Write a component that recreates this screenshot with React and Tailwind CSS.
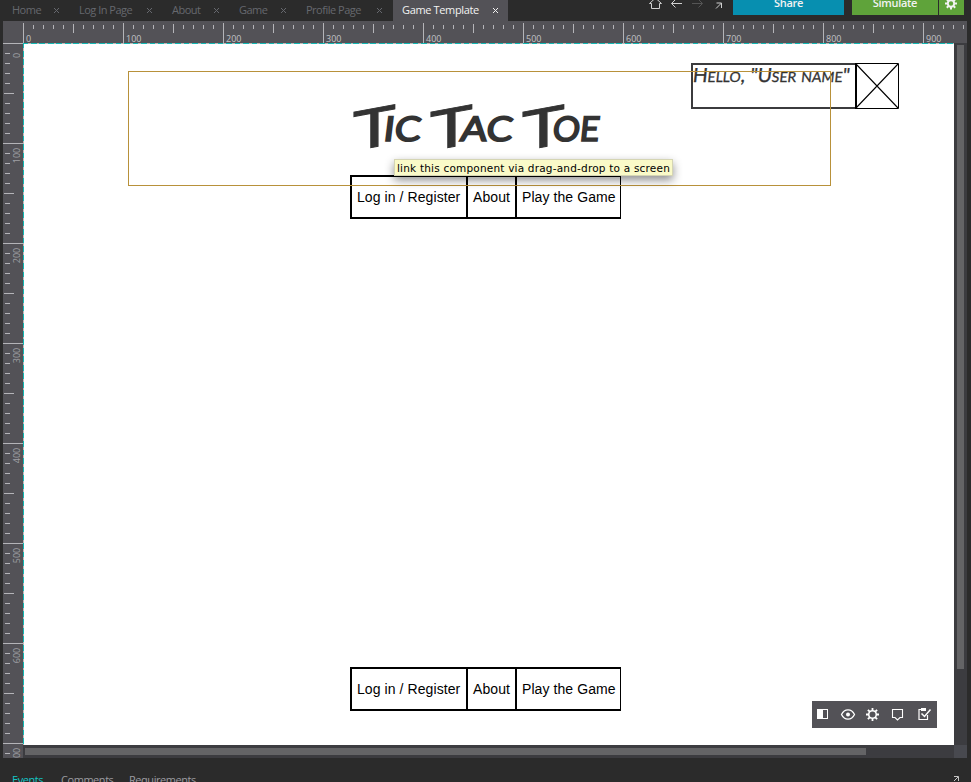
import React from "react";

const tabs = [
  { label: "Home", width: 67 },
  { label: "Log In Page", width: 93 },
  { label: "About", width: 67 },
  { label: "Game", width: 67 },
  { label: "Profile Page", width: 96 },
  { label: "Game Template", width: 115, active: true },
];

function Tab({ label, width, active }) {
  return (
    <div
      style={{ width }}
      className={
        "flex h-[21px] shrink-0 items-center justify-between pl-[9px] " +
        (active ? "bg-[#535257] pr-[9px] text-[#f2f2f2]" : "pr-[10px] text-[#66686e]")
      }
    >
      <span className={"whitespace-nowrap " + (active ? "font-medium tracking-[-0.35px]" : "tracking-[-0.5px]")}>
        {label}
      </span>
      <svg width="7" height="7" viewBox="0 0 7 7" stroke="currentColor" strokeWidth="1">
        <path d="M1 1L6 6M6 1L1 6" />
      </svg>
    </div>
  );
}

function TopRuler() {
  return (
    <div className="flex h-[22px] overflow-hidden bg-[#535257]">
      <div className="w-5 shrink-0" />
      {Array.from({ length: 10 }, (_, i) => (
        <div key={i} className="relative h-[22px] w-[100px] shrink-0">
          <svg width="100" height="22" className="block" stroke="#b4b4b8" shapeRendering="crispEdges">
            <path d="M.5 2V22M50.5 3V12" />
            <path d="M10.5 4V8M20.5 4V8M30.5 4V8M40.5 4V8M60.5 4V8M70.5 4V8M80.5 4V8M90.5 4V8" />
          </svg>
          <span className="absolute left-[3px] top-[12px] text-[9px] leading-[11px] text-[#c2c2c5]">{i * 100}</span>
        </div>
      ))}
    </div>
  );
}

function SideRuler() {
  return (
    <div className="w-5 shrink-0 overflow-hidden bg-[#535257]">
      {Array.from({ length: 8 }, (_, i) => (
        <div key={i} className="relative h-[100px] w-5">
          <svg width="20" height="100" className="block" stroke="#b4b4b8" shapeRendering="crispEdges">
            <path d="M0 .5H20M1 50.5H11" />
            <path d="M2 10.5H7M2 20.5H7M2 30.5H7M2 40.5H7M2 60.5H7M2 70.5H7M2 80.5H7M2 90.5H7" />
          </svg>
          <span className="absolute left-[3px] top-[7px] flex h-[11px] w-[20px] -rotate-90 items-center justify-center text-[9px] leading-[11px] text-[#9fa0a5]">
            {i * 100}
          </span>
        </div>
      ))}
    </div>
  );
}

function Menu() {
  return (
    <div className="flex h-[44px] w-[271px] border-2 border-r border-black font-['Liberation_Sans',sans-serif] text-[14px] leading-[41px] tracking-[0.08px] text-black">
      <span className="h-10 w-[116px] whitespace-nowrap border-r-2 border-black pl-[5px]">Log in / Register</span>
      <span className="h-10 w-[49px] whitespace-nowrap border-r-2 border-black pl-[5px]">About</span>
      <span className="h-10 whitespace-nowrap pl-[5px]">Play the Game</span>
    </div>
  );
}

function Word({ tail, className, tailClassName }) {
  return (
    <span className={"absolute top-[4px] whitespace-nowrap " + className}>
      <span className="inline-block w-[31px] origin-left -skew-y-[14deg] scale-x-[1.34] text-[54px] font-normal [-webkit-text-stroke:1px_#333]">
        T
      </span>
      <span
        className={
          "relative -top-[10px] inline-block origin-left -skew-x-[6deg] text-[34px] font-normal uppercase [-webkit-text-stroke:1.7px_#333] " +
          tailClassName
        }
      >
        {tail}
      </span>
    </span>
  );
}

function Canvas() {
  return (
    <div className="h-[702px] w-[931px] shrink-0 bg-[repeating-linear-gradient(135deg,#13b8b4_0px,#13b8b4_4px,#bdb9b9_4px,#bdb9b9_6px)] pl-px pt-px">
      <div className="relative h-[701px] w-[930px] overflow-hidden bg-white">
        <h1 className="absolute left-[329px] top-[48px] h-[70px] w-[260px] font-['Lato',sans-serif] leading-[70px] text-[#333]">
          <Word tail="ic" className="left-0" tailClassName="scale-x-[1.15]" />{" "}
          <Word tail="ac" className="left-[77px]" tailClassName="scale-x-[1.15]" />{" "}
          <Word tail="oe" className="left-[169px]" tailClassName="scale-x-[1.0]" />
        </h1>

        <div className="absolute left-[667px] top-[19px] flex">
          <div className="h-[46px] w-[164px] border-2 border-r-0 border-[#3b3b3d] text-[#333]">
            <span className="block origin-left -skew-x-[6deg] whitespace-nowrap font-['Lato',sans-serif] text-[19.5px] leading-[19px] [-webkit-text-stroke:0.3px_#333] [font-variant:small-caps]">
              Hello, "User name"
            </span>
          </div>
          <svg width="44" height="46" viewBox="0 0 44 46" fill="none" stroke="#000">
            <path d="M1 1L43 45M43 1L1 45" strokeWidth="1.1" />
            <path d="M1 .5H43.5V45.5H1Z" />
            <path d="M1 0V46" strokeWidth="2" />
          </svg>
        </div>

        <div className="absolute left-[326px] top-[131px]">
          <Menu />
        </div>
        <div className="absolute left-[104px] top-[27px] h-[115px] w-[703px] border border-[#b8913a]" />
        <div className="absolute left-[370px] top-[115px] h-[17px] w-[279px] whitespace-nowrap border border-[#d5d5b4] bg-[#fafac8] pl-[2px] font-['DejaVu_Sans',sans-serif] text-[10.5px] leading-[16px] tracking-[0.2px] text-black shadow-[0_4px_10px_rgba(0,0,0,0.45)]">
          link this component via drag-and-drop to a screen
        </div>
        <div className="absolute left-[326px] top-[623px]">
          <Menu />
        </div>

        <div className="absolute left-[788px] top-[657px] h-[27px] w-[125px] bg-[#535257]">
          <svg width="125" height="27" viewBox="0 0 125 27" fill="none" stroke="#fff">
            <path d="M5 8H16V18H5Z" fill="#fff" stroke="none" />
            <path d="M11 9H15V17H11Z" fill="#535257" stroke="none" />
            <path d="M29.5 13.5C32.5 7.3 39.5 7.3 42.5 13.5C39.5 19.7 32.5 19.7 29.5 13.5Z" strokeWidth="1.3" />
            <circle cx="36" cy="13.5" r="2" fill="#fff" stroke="none" />
            <circle cx="60.5" cy="13.5" r="3.8" strokeWidth="1.6" />
            <path
              d="M60.5 7V9.5M60.5 17.5V20M54 13.5H56.5M64.5 13.5H67M55.9 8.9L57.7 10.7M63.3 16.3L65.1 18.1M65.1 8.9L63.3 10.7M57.7 16.3L55.9 18.1"
              strokeWidth="1.8"
            />
            <path d="M80.5 8.5H90.5V16.5H88L85.5 19L83 16.5H80.5Z" strokeWidth="1.1" />
            <path d="M114 8.5H107V18.5H115.5V14" strokeWidth="1.2" />
            <path d="M109 7H114V10H109Z" fill="#fff" stroke="none" />
            <path d="M109.5 12.5L112.5 15.5L118.5 8.5" strokeWidth="1.5" />
          </svg>
        </div>
      </div>
    </div>
  );
}

export default function App() {
  return (
    <div className="flex h-[782px] w-[971px] flex-col overflow-hidden bg-[#2b2b2b] pl-[3px] font-['Open_Sans',sans-serif] text-[11px]">
      <header className="flex h-[21px] items-start">
        {tabs.map((t) => (
          <Tab key={t.label} {...t} />
        ))}
        <svg className="ml-[141px] h-[15px] w-[84px] shrink-0" viewBox="0 0 84 15" fill="none" stroke="#d0d0d0">
          <path d="M.5 3.5L6.5 -2L12.5 3.5H10.5V8.5H2.5V3.5H.5" />
          <path d="M33 3.5H22.5M26.5 -.5L22.5 3.5L26.5 7.5" />
          <path d="M43 3.5H53.5M49.5 -.5L53.5 3.5L49.5 7.5" stroke="#555" />
          <path d="M67 8.5L72.5 3M67.5 3H72.5V8" />
        </svg>
        <div className="flex h-[15px] w-[111px] shrink-0 justify-center bg-[#078fb0] text-[#f2f2f2]">
          <span className="-mt-[4px] font-semibold leading-[14px] tracking-[-0.3px]">Share</span>
        </div>
        <div className="ml-2 flex h-[15px] w-[86px] shrink-0 justify-center bg-[#5fa33a] text-[#f2f2f2]">
          <span className="-mt-[4px] font-semibold leading-[14px] tracking-[-0.3px]">Simulate</span>
        </div>
        <div className="ml-px h-[15px] w-[25px] shrink-0 bg-[#5fa33a]">
          <svg width="25" height="15" fill="none" stroke="#f2f2f2">
            <circle cx="12" cy="3.5" r="3.2" strokeWidth="2" />
            <path
              d="M12 -2.5V0M12 7V9.5M6 3.5H8.5M15.5 3.5H18M7.8 -.7L9.5 1M14.5 6L16.2 7.7M16.2 -.7L14.5 1M9.5 6L7.8 7.7"
              strokeWidth="2"
            />
          </svg>
        </div>
      </header>

      <main className="w-[964px]">
        <TopRuler />
        <div className="flex h-[715px]">
          <SideRuler />
          <div className="flex w-[931px] shrink-0 flex-col">
            <Canvas />
            <div className="h-[13px] bg-[#3c3c40] pl-[2px] pt-[3px]">
              <div className="h-[7px] w-[841px] bg-[#646466]" />
            </div>
          </div>
          <div className="flex w-[13px] shrink-0 flex-col bg-[#3c3c40]">
            <div className="h-[702px] pl-[3px] pt-[2px]">
              <div className="h-[624px] w-[7px] bg-[#646466]" />
            </div>
            <div className="h-[13px] bg-[#48494f]" />
          </div>
        </div>
      </main>

      <footer className="flex h-[24px] items-start pl-[9px] tracking-[-0.45px] text-[#9b9ba0]">
        <span className="mt-[14px] w-[49px] leading-[15px] text-[#13c5c5]">Events</span>
        <span className="mt-[14px] w-[68px] leading-[15px]">Comments</span>
        <span className="mt-[14px] leading-[15px]">Requirements</span>
        <svg className="ml-auto mr-[11px] mt-[17px]" width="7" height="7" fill="none" stroke="#c5c5c5">
          <path d="M1 1.5H5.5V6M1 6L5 2" />
        </svg>
      </footer>
    </div>
  );
}
